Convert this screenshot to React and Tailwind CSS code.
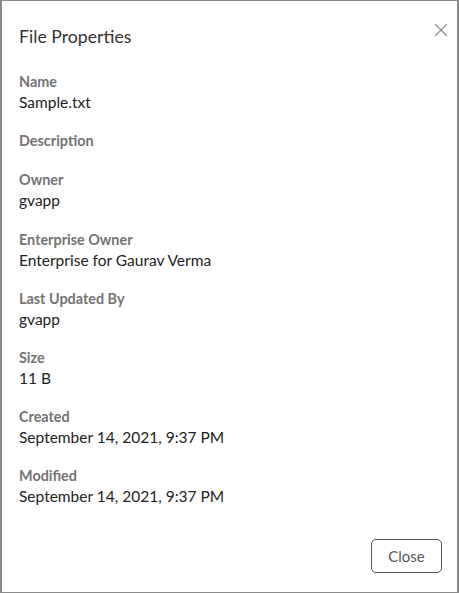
import { X } from 'lucide-react'

const props = [
  { label: 'Name', value: 'Sample.txt' },
  { label: 'Description', value: '' },
  { label: 'Owner', value: 'gvapp' },
  { label: 'Enterprise Owner', value: 'Enterprise for Gaurav Verma' },
  { label: 'Last Updated By', value: 'gvapp' },
  { label: 'Size', value: '11 B' },
  { label: 'Created', value: 'September 14, 2021, 9:37 PM' },
  { label: 'Modified', value: 'September 14, 2021, 9:37 PM' },
]

export default function App() {
  return (
    <div className="w-[459px] h-[593px] bg-white border border-x-2 border-[#8a8a8a] font-['Lato',sans-serif] flex flex-col">
      <div className="flex items-start justify-between pl-[17px] pr-[5px] pt-[24px]">
        <h2 className="text-[17.7px] leading-[24px] text-[#333]">File Properties</h2>
        <button className="mt-[-6px] text-[#8a8a8a]">
          <X size={22} strokeWidth={1.3} />
        </button>
      </div>

      <dl className="pl-[17px] mt-[23px] flex-1">
        {props.map((p) => (
          <div key={p.label} className="mb-[19.2px]">
            <dt className="text-[14.4px] leading-[20px] font-bold text-[#737373]">{p.label}</dt>
            {p.value && <dd className="text-[15.5px] leading-[20px] text-[#222]">{p.value}</dd>}
          </div>
        ))}
      </dl>

      <div className="flex justify-end pr-[15px] pb-[19px]">
        <button className="w-[71px] h-[34px] rounded-[5px] border border-[#555] text-[15px] text-[#555]">
          Close
        </button>
      </div>
    </div>
  )
}
